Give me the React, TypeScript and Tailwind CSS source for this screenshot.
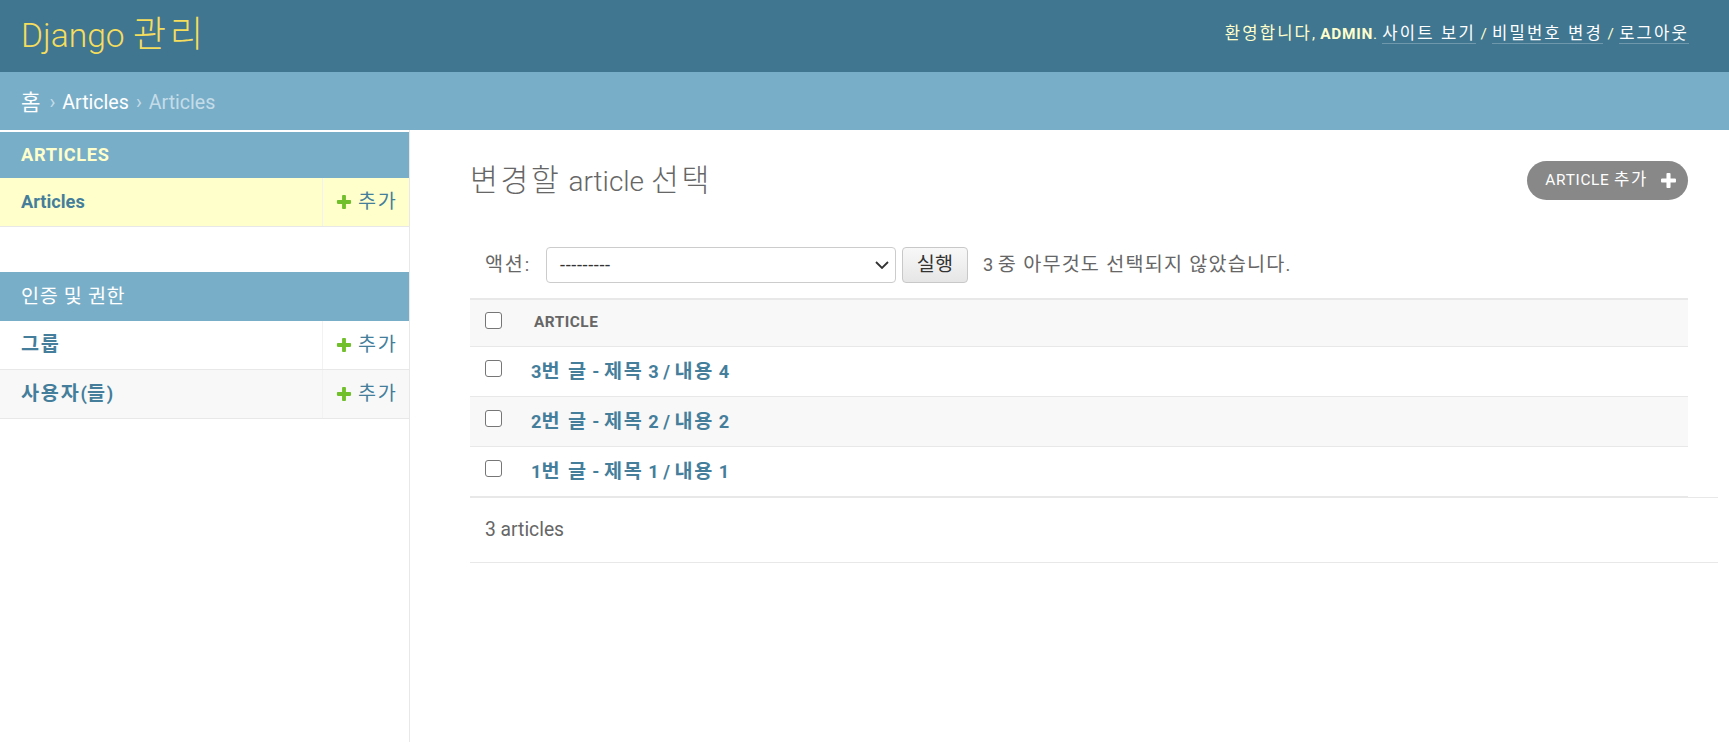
import React from 'react';

// Hangul in the reference is set wider and a touch larger than Noto Sans CJK
function Ko({ children, className = 'tracking-[0.09em]' }: { children: React.ReactNode; className?: string }) {
  return <span className={`text-[1.08em] ${className}`}>{children}</span>;
}

function AddIcon({ className }: { className?: string }) {
  return (
    <svg viewBox="0 0 1792 1792" className={className}>
      <path
        fill="currentColor"
        d="M1600 796v192q0 40-28 68t-68 28h-416v416q0 40-28 68t-68 28h-192q-40 0-68-28t-28-68v-416h-416q-40 0-68-28t-28-68v-192q0-40 28-68t68-28h416v-416q0-40 28-68t68-28h192q40 0 68 28t28 68v416h416q40 0 68 28t28 68z"
      />
    </svg>
  );
}

function Checkbox() {
  return <span className="block h-[17px] w-[17px] rounded-[3px] border-[1.5px] border-[#767676] bg-white" />;
}

function SidebarRow({ name, current, striped }: { name: React.ReactNode; current?: boolean; striped?: boolean }) {
  return (
    <div
      className={`flex h-[49px] border-b border-[#e8e8e8] ${
        current ? 'bg-[#ffffcc]' : striped ? 'bg-[#f8f8f8]' : 'bg-white'
      }`}
    >
      <a href="#" className="flex flex-1 items-center pl-[21px] text-[18.2px] font-bold text-[#447e9b]">
        {name}
      </a>
      <a
        href="#"
        className="flex w-[87px] items-center border-l border-[#f2f2f2] pl-[12px] text-[18.2px] text-[#447e9b]"
      >
        <AddIcon className="h-[18px] w-[18px] shrink-0 text-[#70bf2b]" />
        <span className="ml-[5px]">
          <Ko>추가</Ko>
        </span>
      </a>
    </div>
  );
}

const articles = [
  ['3', '3', '4'],
  ['2', '2', '2'],
  ['1', '1', '1'],
];

export default function App() {
  return (
    <div className="flex min-h-screen flex-col bg-white font-[family-name:Roboto,'Noto_Sans_CJK_KR',sans-serif] text-[#333]">
      {/* Header */}
      <header className="flex h-[72px] shrink-0 items-start justify-between bg-[#417690] pl-[21px] pr-[40px]">
        <h1 className="pt-[15px] text-[33.6px] font-light leading-[40px] text-[#f5dd5d]">
          Django <Ko className="tracking-[0.1em]">관리</Ko>
        </h1>
        <div className="pt-[23px] text-[15.4px] leading-[22px] tracking-[0.7px] text-[#ffffcc]">
          <Ko className="tracking-[0.13em]">환영합니다</Ko>, <strong className="font-bold uppercase">admin</strong>.{' '}
          <a href="#" className="border-b border-white/25 text-white">
            <Ko className="tracking-[0.13em]">사이트 보기</Ko>
          </a>{' '}
          /{' '}
          <a href="#" className="border-b border-white/25 text-white">
            <Ko className="tracking-[0.13em]">비밀번호 변경</Ko>
          </a>{' '}
          /{' '}
          <a href="#" className="border-b border-white/25 text-white">
            <Ko className="tracking-[0.13em]">로그아웃</Ko>
          </a>
        </div>
      </header>

      {/* Breadcrumbs */}
      <div className="flex h-[58px] shrink-0 items-center bg-[#79aec8] pl-[21px] pt-[4px] text-[19.6px] text-[#c4dce8]">
        <a href="#" className="text-white">
          <Ko>홈</Ko>
        </a>
        <span className="mx-[7px]">›</span>
        <a href="#" className="text-white">Articles</a>
        <span className="mx-[7px]">›</span>
        <span>Articles</span>
      </div>

      <div className="flex flex-1">
        {/* Sidebar */}
        <nav className="w-[410px] shrink-0 border-r border-[#e8e8e8] pt-[2px]">
          <div className="flex h-[46px] items-center bg-[#79aec8] pl-[21px] text-[18.2px] font-bold uppercase tracking-[0.7px] text-[#ffffcc]">
            Articles
          </div>
          <SidebarRow name="Articles" current />

          <div className="mt-[45px] flex h-[49px] items-center bg-[#79aec8] pl-[21px] text-[18.2px] text-white">
            <Ko className="tracking-[0.03em]">인증 및 권한</Ko>
          </div>
          <SidebarRow name={<Ko>그룹</Ko>} />
          <SidebarRow
            name={
              <>
                <Ko>사용자</Ko>(<Ko>들</Ko>)
              </>
            }
            striped
          />
        </nav>

        {/* Content */}
        <main className="flex-1 pl-[60px] pr-[11px]">
          <div className="mr-[30px]">
            <div className="mt-[31px] flex h-[39px] items-center justify-between">
              <h1 className="text-[28px] font-light text-[#666]">
                <Ko>변경할</Ko> article <Ko>선택</Ko>
              </h1>
              <a
                href="#"
                className="flex h-[39px] items-center rounded-full bg-[#888] pl-[18px] pr-[10px] text-[15.4px] uppercase tracking-[0.7px] text-white"
              >
                <span>
                  Article <Ko className="tracking-[0.1em]">추가</Ko>
                </span>
                <AddIcon className="ml-[11px] h-[19px] w-[19px] text-white" />
              </a>
            </div>

            {/* Actions */}
            <div className="mt-[47px] flex h-[36px] items-center pl-[15px] text-[18.2px] text-[#666]">
              <label>
                <Ko>액션</Ko>:
              </label>
              <div className="ml-[17px] flex h-[36px] w-[350px] items-center justify-between rounded-[4px] border border-[#ccc] bg-white pl-[13px] pr-[6px] text-[#333]">
                <span className="tracking-[0.6px]">---------</span>
                <svg viewBox="0 0 14 8" className="h-[8px] w-[14px]">
                  <polyline points="1,1 7,7 13,1" fill="none" stroke="#333" strokeWidth="1.8" />
                </svg>
              </div>
              <button className="ml-[6px] h-[36px] w-[66px] rounded-[4px] border border-[#c8c8c8] bg-gradient-to-b from-[#f8f8f8] to-[#e6e6e6] text-[18.2px] text-[#333]">
                <Ko className="tracking-[0.02em]">실행</Ko>
              </button>
              <span className="ml-[15px]">
                3 <Ko className="tracking-[0.06em]">중 아무것도 선택되지 않았습니다</Ko>.
              </span>
            </div>

            {/* Results */}
            <div className="mt-[15px]">
              <div className="flex h-[49px] border-t-2 border-b border-[#e8e8e8] bg-[#f8f8f8]">
                <div className="w-[61px] pl-[15px] pt-[12px]">
                  <Checkbox />
                </div>
                <div className="flex items-center pl-[3px] text-[15.4px] font-bold uppercase tracking-[0.5px] text-[#666]">
                  Article
                </div>
              </div>
              {articles.map(([n, t, c], i) => (
                <div
                  key={n}
                  className={`flex h-[50px] border-b border-[#e8e8e8] ${i % 2 === 1 ? 'bg-[#f8f8f8]' : 'bg-white'}`}
                >
                  <div className="w-[61px] pl-[15px] pt-[13px]">
                    <Checkbox />
                  </div>
                  <a href="#" className="flex items-center text-[18.2px] font-bold text-[#447e9b]">
                    <span>
                      {n}
                      <Ko>번 글</Ko> - <Ko>제목</Ko> {t} / <Ko>내용</Ko> {c}
                    </span>
                  </a>
                </div>
              ))}
            </div>
          </div>

          {/* Paginator */}
          <div className="flex h-[66px] items-center border-y border-[#e8e8e8] pl-[15px] text-[19.3px] text-[#666]">
            3 articles
          </div>
        </main>
      </div>
    </div>
  );
}
